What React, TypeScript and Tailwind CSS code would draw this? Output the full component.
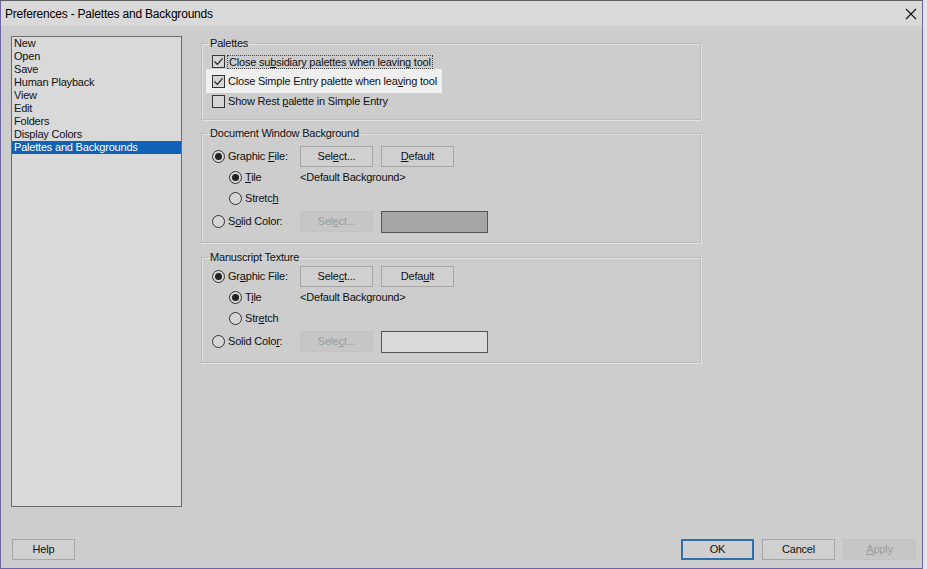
import React from "react";

const FONT = "font-['Liberation_Sans',Arial,sans-serif] text-[11px] tracking-[-0.2px] text-[#111]";

const LIST_ITEMS = ["New", "Open", "Save", "Human Playback", "View", "Edit", "Folders", "Display Colors", "Palettes and Backgrounds"];

function Checkbox({ checked }: { checked?: boolean }) {
  return (
    <span className="flex h-[13px] w-[13px] shrink-0 items-center justify-center border border-[#333] bg-[#d6d6d6]">
      {checked && (
        <svg width="11" height="11" viewBox="0 0 11 11">
          <path d="M1.5 5.5 L4.3 8.3 L9.6 2.4" fill="none" stroke="#222" strokeWidth="1.2" />
        </svg>
      )}
    </span>
  );
}

function Radio({ on }: { on?: boolean }) {
  return (
    <span className="flex h-[13px] w-[13px] shrink-0 items-center justify-center rounded-full border border-[#333] bg-[#d6d6d6]">
      {on && <span className="h-[7px] w-[7px] rounded-full bg-[#222]" />}
    </span>
  );
}

function Btn({ children, disabled, primary, w = "w-[73px]" }: { children: React.ReactNode; disabled?: boolean; primary?: boolean; w?: string }) {
  const base = "flex h-[21px] shrink-0 items-center justify-center " + w;
  if (disabled) return <div className={base + " border border-[#c2c2c2] bg-[#c6c6c6] text-[#9c9c9c]"}>{children}</div>;
  if (primary) return <div className={base + " border-2 border-[#2f6fae] bg-[#cfcfcf]"}>{children}</div>;
  return <div className={base + " border border-[#a6a6a6] bg-[#d0d0d0]"}>{children}</div>;
}

function U({ children }: { children: React.ReactNode }) {
  return <span className="underline underline-offset-[1px]">{children}</span>;
}

function Group({ title, h, mt, children }: { title: string; h: string; mt: string; children: React.ReactNode }) {
  return (
    <fieldset className={"w-[500px] border border-[#bcbcbc] pl-[10px] shadow-[inset_1px_1px_0_#e2e2e2,1px_1px_0_#e2e2e2] " + h + " " + mt}>
      <legend className="-ml-[4px] px-[2px] leading-[13px]">{title}</legend>
      {children}
    </fieldset>
  );
}

function BgGroup({ title, h, mt, pt, swatch, labels }: {
  title: string; h: string; mt: string; pt: string; swatch: string;
  labels: { graphic: React.ReactNode; select: React.ReactNode; def: React.ReactNode; tile: React.ReactNode; stretch: React.ReactNode; solid: React.ReactNode; select2: React.ReactNode };
}) {
  return (
    <Group title={title} h={h} mt={mt}>
      <div className={"flex flex-col " + pt}>
        <div className="flex h-[21px] items-center">
          <div className="flex w-[88px] items-center gap-[3px]"><Radio on />{labels.graphic}</div>
          <Btn>{labels.select}</Btn>
          <div className="w-[8px]" />
          <Btn>{labels.def}</Btn>
        </div>
        <div className="flex h-[21px] items-center">
          <div className="flex w-[88px] items-center gap-[3px] pl-[17px]"><Radio on />{labels.tile}</div>
          <span>&lt;Default Background&gt;</span>
        </div>
        <div className="flex h-[20px] items-center">
          <div className="flex w-[88px] items-center gap-[3px] pl-[17px]"><Radio />{labels.stretch}</div>
        </div>
        <div className="mt-[3px] flex h-[21px] items-center">
          <div className="flex w-[88px] items-center gap-[3px]"><Radio />{labels.solid}</div>
          <Btn disabled>{labels.select2}</Btn>
          <div className={"ml-[8px] h-[22px] w-[107px] border border-[#555] " + swatch} />
        </div>
      </div>
    </Group>
  );
}

export default function App() {
  return (
    <div className={"flex h-[569px] w-[927px] bg-[#e4e4e4] " + FONT}>
      <div className="flex h-[569px] w-[923px] flex-col border-x border-b border-t border-[#6d63a3] border-t-[#5e5e5e] bg-[#cdcdcd]">
        {/* title bar */}
        <div className="flex h-[25px] shrink-0 items-center justify-between bg-[#d9d9d9] pl-[4px] pr-[6px]">
          <span className="text-[12px] tracking-[-0.2px] text-[#000]">Preferences - Palettes and Backgrounds</span>
          <svg width="12" height="12" viewBox="0 0 12 12" className="mr-[-1px]">
            <path d="M1 1 L11 11 M11 1 L1 11" stroke="#111" strokeWidth="1.1" />
          </svg>
        </div>

        <div className="flex h-[478px] shrink-0 pl-[10px] pt-[10px]">
          {/* list */}
          <div className="flex h-[471px] w-[171px] shrink-0 flex-col border border-[#6c6c6c] bg-[#d9d9d9]">
            {LIST_ITEMS.map((it, i) => (
              <div key={it} className={"h-[13px] pl-[2px] leading-[13px] " + (i === LIST_ITEMS.length - 1 ? "bg-[#1062b5] text-white" : "")}>{it}</div>
            ))}
          </div>

          {/* groups */}
          <div className="ml-[19px] flex flex-col pt-[1px]">
            <Group title="Palettes" h="h-[83px]" mt="">
              <div className="flex flex-col pt-[2px]">
                <div className="flex h-[19px] items-center gap-[2px]">
                  <Checkbox checked />
                  <span className="border border-dotted border-[#444] px-[1px] leading-[12px]">Close su<U>b</U>sidiary palettes when leaving tool</span>
                </div>
                <div className="-ml-[6px] -my-[2px] flex h-[24px] w-[236px] items-center gap-[3px] bg-[#efefef] pl-[6px]">
                  <Checkbox checked />
                  <span>Close Simple Entry palette when lea<U>v</U>ing tool</span>
                </div>
                <div className="flex h-[20px] items-center gap-[3px]">
                  <Checkbox />
                  <span>Show Rest <U>p</U>alette in Simple Entry</span>
                </div>
              </div>
            </Group>

            <BgGroup
              title="Document Window Background"
              h="h-[116px]"
              mt="mt-[7px]"
              pt="pt-[6px]"
              swatch="bg-[#a6a6a6]"
              labels={{
                graphic: <span>Graphic <U>F</U>ile:</span>,
                select: <span>Sel<U>e</U>ct...</span>,
                def: <span><U>D</U>efault</span>,
                tile: <span><U>T</U>ile</span>,
                stretch: <span>Stretc<U>h</U></span>,
                solid: <span>S<U>o</U>lid Color:</span>,
                select2: <span>Sel<U>e</U>ct...</span>,
              }}
            />

            <BgGroup
              title="Manuscript Texture"
              h="h-[112px]"
              mt="mt-[8px]"
              pt="pt-[2px]"
              swatch="bg-[#dadada]"
              labels={{
                graphic: <span>Gr<U>a</U>phic File:</span>,
                select: <span>Sele<U>c</U>t...</span>,
                def: <span>Defa<U>u</U>lt</span>,
                tile: <span>T<U>i</U>le</span>,
                stretch: <span>Str<U>e</U>tch</span>,
                solid: <span>Solid Colo<U>r</U>:</span>,
                select2: <span>Sele<U>c</U>t...</span>,
              }}
            />
          </div>
        </div>

        {/* footer */}
        <div className="mt-[35px] flex items-center pl-[11px] pr-[6px]">
          <Btn w="w-[63px]">Help</Btn>
          <div className="flex-1" />
          <Btn primary>OK</Btn>
          <div className="w-[8px]" />
          <Btn>Cancel</Btn>
          <div className="w-[8px]" />
          <Btn disabled><span><U>A</U>pply</span></Btn>
        </div>
      </div>
    </div>
  );
}
